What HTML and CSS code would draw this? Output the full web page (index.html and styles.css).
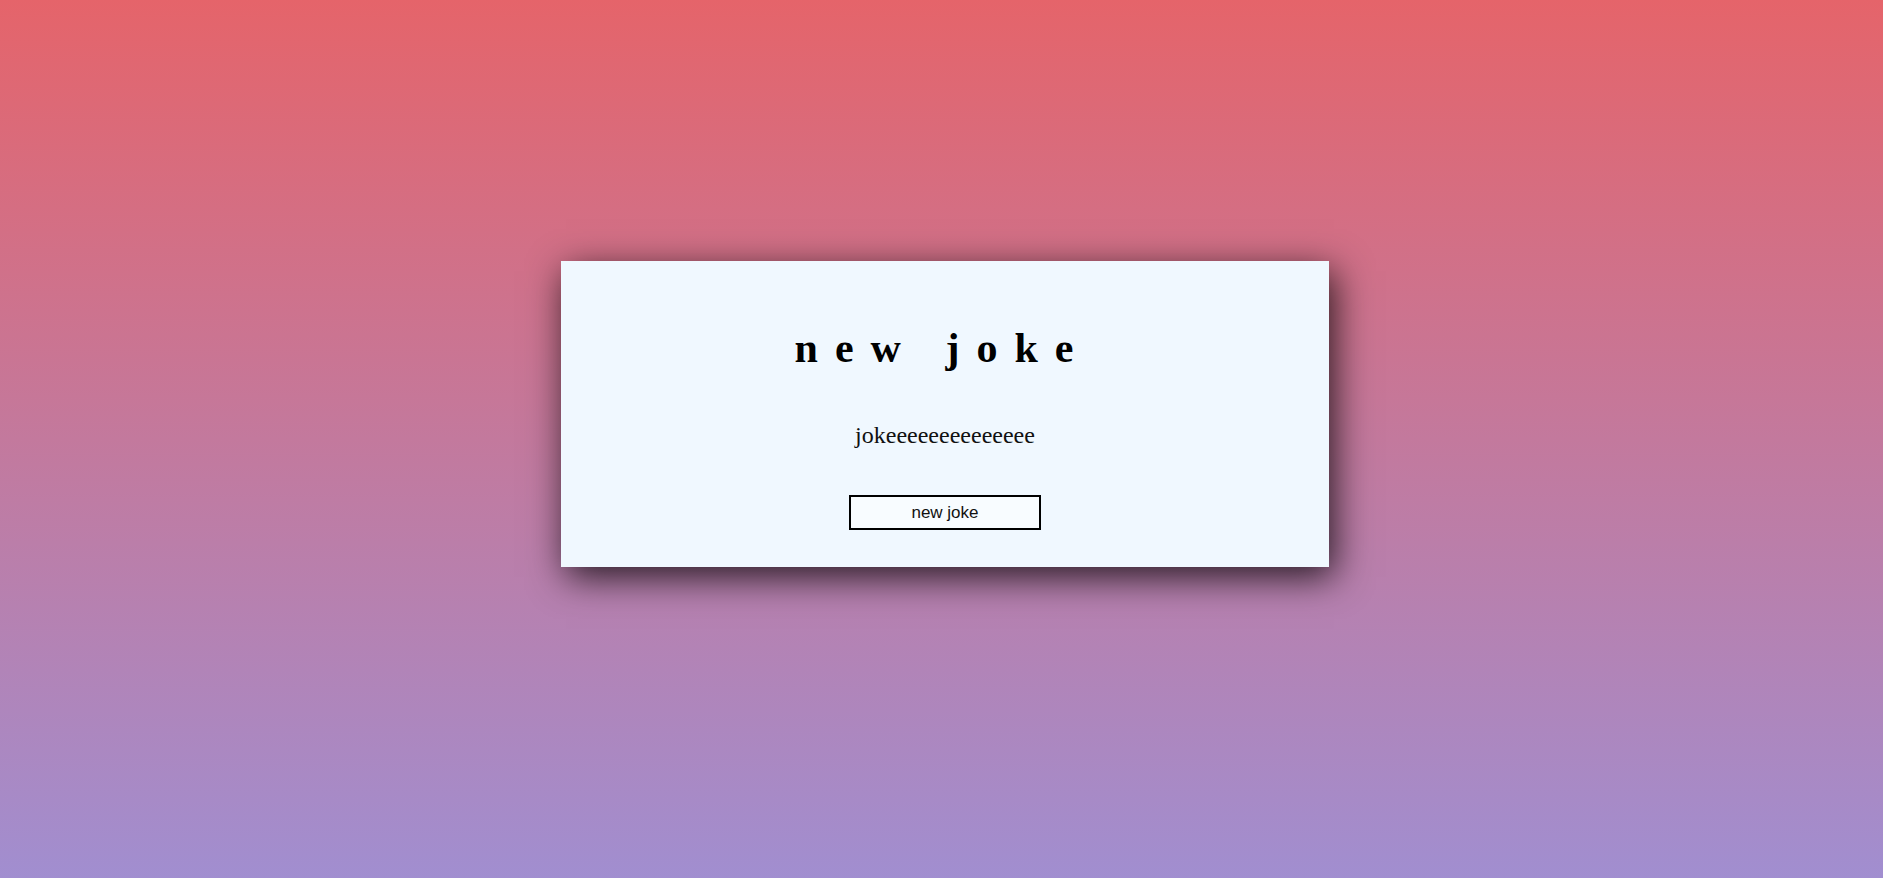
FILE: index.html
```html
<!DOCTYPE html>
<html lang="en">
<head>
  <meta charset="UTF-8" />
  <title>Joke Generator</title>
  <link rel="stylesheet" href="styles.css">
</head>
<body>

  <!-- joke card -->
  <div class="card">
    <h1 class="title">new joke</h1>
    <p class="joke" id="joke">jokeeeeeeeeeeeeee</p>
    <button class="joke-btn" id="joke-btn">new joke</button>
  </div>

</body>
</html>
```

FILE: styles.css
```css
* {
  box-sizing: border-box;
}

body {
  margin: 0;
  min-height: 100vh;
  padding: 261px 0 0 7px;
  background: linear-gradient(#e5646a, #a18ed0);
  font-family: "Liberation Serif", "Times New Roman", serif;
  text-align: center;
}

.card {
  width: 768px;
  margin: 0 auto;
  padding: 63px 20px 37px;
  background-color: #f0f8ff;
  box-shadow: 5px 10px 35px rgba(0, 0, 0, 0.8);
}

.title {
  margin: 0 0 49px;
  padding-right: 5px;
  font-size: 42px;
  line-height: 48px;
  letter-spacing: 17px;
  font-weight: bold;
  color: #000;
}

.joke {
  margin: 0 0 46px;
  font-size: 24px;
  line-height: 28px;
  color: #111;
}

.joke-btn {
  width: 192px;
  height: 35px;
  font-family: "Liberation Sans", Arial, sans-serif;
  font-size: 17px;
  background-color: #f8fcff;
  border: 2px solid black;
  color: #111;
  cursor: pointer;
}
```
